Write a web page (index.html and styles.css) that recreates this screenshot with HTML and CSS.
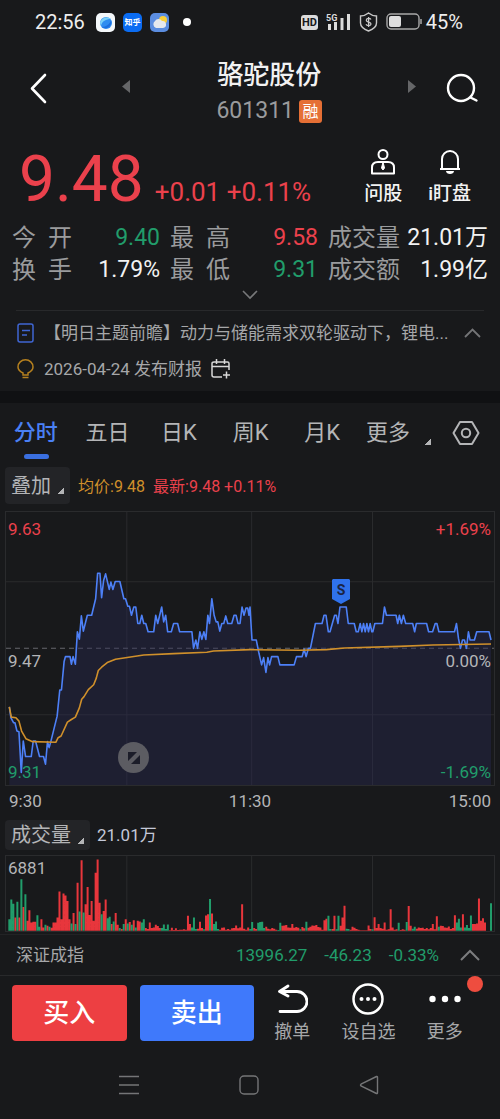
FILE: index.html
```html
<!DOCTYPE html>
<html lang="zh-CN">
<head>
    <meta charset="UTF-8">
    <meta name="viewport" content="width=device-width, initial-scale=1.0">
    <title>骆驼股份 601311</title>
    <link rel="stylesheet" href="styles.css">
</head>
<body>
    <div class="status-bar">
        <span class="clock">22:56</span>
        <span class="app-icon app-browser">
            <svg width="19" height="19" viewBox="0 0 19 19"><circle cx="10" cy="10" r="6" fill="#2f8df0"/><path d="M4 10c1-5 7-7 11-4-5 0-9 2-10 7z" fill="#7ad0f8"/><path d="M6 14c4 0 8-3 9-7 2 5-4 11-9 7z" fill="#1c6fe0"/></svg>
        </span>
        <span class="app-icon app-zhihu">知乎</span>
        <span class="app-icon app-weather">
            <svg width="19" height="19" viewBox="0 0 19 19"><circle cx="13" cy="7" r="4" fill="#f9cf3a"/><path d="M6 15a4 4 0 0 1-1-7 4 4 0 0 1 7 0 3.500 3.500 0 0 1 1 7z" fill="#e6e9ee"/></svg>
        </span>
        <span class="status-dot"></span>
        <div class="status-right">
            <span class="hd">HD</span>
            <svg width="25" height="18" viewBox="0 0 25 18">
                <text x="0" y="8" class="net-text">5G</text>
                <path d="M3.500 11v6M9.500 9v8M16 5v12M22.500 1v16" stroke="#dcdcdc" stroke-width="3"/>
            </svg>
            <svg class="shield" width="19" height="20" viewBox="0 0 19 20" fill="none" stroke="#c8c8c8">
                <path d="M9.500 1C7 3 4 4 1.500 4v7c0 4 4 6.500 8 8 4-1.500 8-4 8-8V4C15 4 12 3 9.500 1z" stroke-width="1.400"/>
                <path d="M12 7.500C11 6 7.300 6 7.300 8.200c0 2.400 4.700 1.400 4.700 3.700 0 2-4 2.200-5 .4M9.600 5v10" stroke-width="1.300"/>
            </svg>
            <svg class="battery" width="36" height="18" viewBox="0 0 36 18">
                <rect x="1" y="1" width="32" height="15" rx="4" fill="none" stroke="#a8a8a8" stroke-width="1.400"/>
                <rect x="3" y="3" width="12" height="11" rx="2" fill="#dedede"/>
                <path d="M35 6v5" stroke="#a8a8a8" stroke-width="1.500"/>
            </svg>
            <span class="battery-text">45%</span>
        </div>
    </div>

    <header class="header">
        <button class="icon-btn" aria-label="返回">
            <svg width="20" height="32" viewBox="0 0 20 32"><path d="M17 3L4 16.500 17 30" fill="none" stroke="#fff" stroke-width="2.600" stroke-linecap="round" stroke-linejoin="round"/></svg>
        </button>
        <div class="switcher">
            <button class="icon-btn" aria-label="上一只">
                <svg width="8" height="13" viewBox="0 0 8 13"><path d="M8 0v13L0 6.500z" fill="#656668"/></svg>
            </button>
            <div class="title">
                <h1>骆驼股份</h1>
                <div class="code"><span>601311</span><span class="tag">融</span></div>
            </div>
            <button class="icon-btn" aria-label="下一只">
                <svg width="8" height="13" viewBox="0 0 8 13"><path d="M0 0v13l8-6.500z" fill="#656668"/></svg>
            </button>
        </div>
        <button class="icon-btn" aria-label="搜索">
            <svg width="34" height="32" viewBox="0 0 34 32" fill="none" stroke="#fff" stroke-width="2.400" stroke-linecap="round"><circle cx="15" cy="16" r="13"/><path d="M24.500 25.500l6 3"/></svg>
        </button>
    </header>

    <section class="quote">
        <div class="price-row">
            <span class="price">9.48</span>
            <span class="change">+0.01 +0.11%</span>
            <div class="actions">
                <button class="action">
                    <svg width="26" height="28" viewBox="0 0 26 28" fill="none" stroke="#fff" stroke-width="2"><circle cx="13" cy="6.500" r="4.500"/><path d="M2 25.500v-6c0-4 2-5.500 6-5.500h10c4 0 6 1.500 6 5.500v6z" stroke-linejoin="round"/><path d="M13 14l-1.500 6 1.500 2 1.500-2z" fill="#fff" stroke-width="1"/></svg>
                    <span>问股</span>
                </button>
                <button class="action">
                    <svg width="22" height="28" viewBox="0 0 22 28"><path d="M3 21V11a8 8 0 0 1 16 0v10z" fill="none" stroke="#fff" stroke-width="2"/><path d="M1 21h20" stroke="#fff" stroke-width="2"/><path d="M7 23h8c0 4-8 4-8 0z" fill="#fff"/></svg>
                    <span>i盯盘</span>
                </button>
            </div>
        </div>
        <dl class="stats">
            <dt>今 开</dt><dd class="down">9.40</dd>
            <dt>最 高</dt><dd class="up">9.58</dd>
            <dt>成交量</dt><dd>21.01万</dd>
            <dt>换 手</dt><dd>1.79%</dd>
            <dt>最 低</dt><dd class="down">9.31</dd>
            <dt>成交额</dt><dd>1.99亿</dd>
        </dl>
        <button class="expand" aria-label="展开">
            <svg width="16" height="10" viewBox="0 0 16 10"><path d="M1 1l7 7 7-7" fill="none" stroke="#77787a" stroke-width="1.600"/></svg>
        </button>
    </section>

    <section class="news">
        <a href="#" class="news-row">
            <svg width="18" height="20" viewBox="0 0 18 20" fill="none" stroke="#3f66d4" stroke-width="1.500"><rect x="1" y="1" width="15" height="18" rx="2"/><path d="M5 7.500h8M5 12h5"/></svg>
            <span class="news-title">【明日主题前瞻】动力与储能需求双轮驱动下，锂电...</span>
            <svg class="news-arrow" width="17" height="10" viewBox="0 0 17 10"><path d="M1 9l7.500-7.500L16 9" fill="none" stroke="#747577" stroke-width="1.800"/></svg>
        </a>
        <a href="#" class="news-row">
            <svg width="18" height="20" viewBox="0 0 18 20" fill="none" stroke="#b5801f" stroke-width="1.500"><path d="M6 16v-2C3 12.500 1 10.500 1 8a7.500 7.200 0 0 1 15 0c0 2.500-2 4.500-5 6v2zM5.500 18.500h6"/></svg>
            <span>2026-04-24 发布财报</span>
            <svg width="20" height="20" viewBox="0 0 20 20" fill="none" stroke="#d8d8d8" stroke-width="1.500"><path d="M11 18H3c-1.500 0-2-.5-2-2V4.500C1 3.500 1.500 3 3 3h13.500c1 0 1.500.5 1.500 1.500V11M1 7.500h17M5.500 0v5M13.500 0v5M15.500 12.500v7M12 16h7"/></svg>
        </a>
    </section>

    <nav class="tabs">
        <button class="tab active">分时</button>
        <button class="tab">五日</button>
        <button class="tab">日K</button>
        <button class="tab">周K</button>
        <button class="tab">月K</button>
        <div class="tabs-end">
            <button class="more">更多<i class="corner"></i></button>
            <button class="icon-btn" aria-label="设置">
                <svg width="28" height="26" viewBox="0 0 28 26" fill="none" stroke="#b4b5b7" stroke-width="2"><path d="M8 2h12l6.500 11L20 24H8L1.500 13z" stroke-linejoin="round"/><circle cx="14" cy="13" r="4.200"/></svg>
            </button>
        </div>
    </nav>

    <div class="legend">
        <button class="chip">叠加<i class="corner"></i></button>
        <span class="avg">均价:9.48</span>
        <span class="up">最新:9.48 +0.11%</span>
    </div>

    <div class="chart price-chart">
        <svg class="plot" viewBox="15 18 1470 825" preserveAspectRatio="none">
            <path class="grid" d="M15 229H1485M15 631H1485M379 18V843M755 18V843M1119 18V843"/>
            <path class="grid dashed" d="M15 430H1485"/>
            <path id="priceArea" class="area"/>
            <path id="priceLine" class="line"/>
            <path id="avgLine" class="line avg-line"/>
        </svg>
        <span class="label top-left up">9.63</span>
        <span class="label top-right up">+1.69%</span>
        <span class="label mid-left">9.47</span>
        <span class="label mid-right">0.00%</span>
        <span class="label bottom-left down">9.31</span>
        <span class="label bottom-right down">-1.69%</span>
        <svg class="marker" width="18" height="25" viewBox="0 0 18 25"><path d="M1 0h16l1 1v19l-9 5-9-5V1z" fill="#2f72ec"/><text x="9" y="16" text-anchor="middle">S</text></svg>
        <button class="zoom-btn" aria-label="全屏">
            <svg width="14" height="14" viewBox="0 0 14 14" fill="#1c1d29"><path d="M1 1h9L1 10zM13 4v9H4z"/></svg>
        </button>
    </div>
    <div class="times"><span>9:30</span><span>11:30</span><span>15:00</span></div>

    <div class="volume-head">
        <button class="chip">成交量<i class="corner"></i></button>
        <span>21.01万</span>
    </div>
    <div class="chart volume-chart">
        <svg class="plot" viewBox="15 121 1470 228" preserveAspectRatio="none">
            <path class="grid" d="M379 121V349M755 121V349M1119 121V349"/>
            <path id="volUp" class="vol vol-up"/>
            <path id="volDown" class="vol vol-down"/>
        </svg>
        <span class="label volume-label">6881</span>
    </div>

    <div class="index-bar">
        <span class="index-name">深证成指</span>
        <span>13996.27</span>
        <span>-46.23</span>
        <span>-0.33%</span>
        <svg width="20" height="12" viewBox="0 0 20 12"><path d="M1 11l9-9 9 9" fill="none" stroke="#7c7d7f" stroke-width="2"/></svg>
    </div>

    <footer class="trade">
        <button class="trade-btn buy">买入</button>
        <button class="trade-btn sell">卖出</button>
        <button class="tool">
            <svg width="32" height="32" viewBox="0 0 32 32" fill="none" stroke="#fff" stroke-width="2.800" stroke-linecap="round" stroke-linejoin="round"><path d="M12 3L3.500 8.500 12 13M4 8.500h17a9.800 9.800 0 0 1 0 20H4"/></svg>
            <span>撤单</span>
        </button>
        <button class="tool">
            <svg width="32" height="32" viewBox="0 0 32 32"><circle cx="16" cy="16" r="14.500" fill="none" stroke="#fff" stroke-width="2.500"/><g fill="#fff"><circle cx="9.500" cy="16" r="2"/><circle cx="16" cy="16" r="2"/><circle cx="22.500" cy="16" r="2"/></g></svg>
            <span>设自选</span>
        </button>
        <button class="tool">
            <svg width="32" height="32" viewBox="0 0 32 32" fill="#fff"><circle cx="3.500" cy="16" r="3.200"/><circle cx="16" cy="16" r="3.200"/><circle cx="28.500" cy="16" r="3.200"/></svg>
            <span>更多</span>
            <i class="badge"></i>
        </button>
    </footer>

    <div class="system-nav">
        <svg width="20" height="20" viewBox="0 0 20 20"><path d="M0 1.500h20M0 10h20M0 18.500h20"/></svg>
        <svg width="20" height="20" viewBox="0 0 20 20"><rect x="1" y="1" width="18" height="18" rx="4"/></svg>
        <svg width="20" height="20" viewBox="0 0 20 20"><path d="M17.500 1.500Q18.500 1 18.500 2.500v15q0 1.500-1 1L2 11q-1-1 0-1.800z"/></svg>
    </div>

    <script src="script.js"></script>
</body>
</html>
```
FILE: styles.css
```css
* {
    box-sizing: border-box;
}
body {
    margin: 0;
    background: #18191b;
    color: #b4b5b7;
    font-family: Roboto, "Noto Sans CJK SC", sans-serif;
    font-size: 17px;
    line-height: 24px;
}
button {
    padding: 0;
    border: none;
    background: none;
    color: inherit;
    font: inherit;
    cursor: pointer;
}
svg {
    display: block;
    flex: none;
}
.up {
    color: #eb414c;
}
.down {
    color: #219d6b;
}
.corner {
    width: 7px;
    height: 7px;
    background: linear-gradient(135deg, transparent 50%, #b4b5b7 50%);
}

/* status bar */
.status-bar {
    display: flex;
    align-items: center;
    height: 44px;
    padding: 0 37px 0 35px;
    color: #eeeeee;
}
.clock {
    width: 61px;
    font-size: 20px;
}
.app-icon {
    width: 19px;
    height: 19px;
    margin-right: 8px;
    border-radius: 5px;
    overflow: hidden;
}
.app-browser {
    background: #f4f8fb;
}
.app-zhihu {
    background: #0b6cf2;
    color: #ffffff;
    font-size: 8px;
    font-weight: bold;
    line-height: 19px;
    text-align: center;
}
.app-weather {
    background: #5b8de0;
}
.status-dot {
    width: 8px;
    height: 8px;
    margin-left: 6px;
    border-radius: 50%;
    background: #ffffff;
}
.status-right {
    display: flex;
    align-items: center;
    gap: 8px;
    margin-left: auto;
}
.hd {
    width: 17px;
    height: 15px;
    border-radius: 3px;
    background: #dcdcdc;
    color: #18191b;
    font-size: 11px;
    font-weight: bold;
    line-height: 15px;
    text-align: center;
}
.net-text {
    fill: #dcdcdc;
    font-size: 9px;
    font-weight: bold;
}
.battery-text {
    margin-left: -4px;
    font-size: 20px;
}

/* header */
.header {
    display: flex;
    align-items: center;
    height: 86px;
    padding: 2px 20px 0 28px;
}
.icon-btn {
    display: flex;
}
.switcher {
    display: flex;
    align-items: center;
    gap: 86px;
    margin: 0 30px 4px auto;
}
.title {
    padding-top: 14px;
    text-align: center;
}
.title h1 {
    margin: 0;
    color: #f2f2f2;
    font-size: 26px;
    font-weight: 500;
    line-height: 36px;
}
.code {
    display: flex;
    align-items: center;
    justify-content: center;
    gap: 5px;
    color: #9a9b9d;
    font-size: 23px;
    line-height: 36px;
}
.tag {
    width: 23px;
    height: 23px;
    border-radius: 3px;
    background: #e56f35;
    color: #ffffff;
    font-size: 16px;
    line-height: 23px;
    text-align: center;
}

/* quote */
.price-row {
    display: flex;
    align-items: baseline;
    height: 92px;
    padding: 0 29px 0 19px;
    color: #eb414c;
}
.price {
    font-size: 64px;
    line-height: 100px;
}
.change {
    margin-left: 11px;
    font-size: 26px;
}
.actions {
    display: flex;
    align-self: flex-start;
    gap: 26px;
    margin-left: auto;
    padding-top: 18px;
}
.action {
    display: flex;
    flex-direction: column;
    align-items: center;
    gap: 5px;
    color: #f2f2f2;
    font-size: 19px;
    font-weight: 500;
    line-height: 26px;
}
.stats {
    display: grid;
    grid-template-columns: 60px 1fr 70px 1fr 82px 1fr;
    margin: 0;
    padding: 0 12px;
    font-size: 24px;
    line-height: 32px;
}
.stats dt {
    color: #9a9b9d;
    text-align-last: justify;
}
.stats dt:not(:nth-of-type(3n + 1)) {
    padding-left: 10px;
}
.stats dd {
    margin: 0;
    color: #f2f2f2;
    font-size: 23px;
    text-align: right;
    white-space: nowrap;
}
.stats dd.up {
    color: #eb414c;
}
.stats dd.down {
    color: #219d6b;
}
.expand {
    display: flex;
    margin: 0 auto;
    padding: 4px 0 10px;
}

/* news */
.news {
    padding-bottom: 4px;
    border-bottom: 12px solid #101113;
}
.news::before {
    content: "";
    display: block;
    margin: 0 16px 4px;
    border-top: 1px solid #28292b;
}
.news-row {
    display: flex;
    align-items: center;
    gap: 9px;
    height: 36px;
    padding: 0 19px 0 17px;
    color: #a6a7a9;
    text-decoration: none;
    white-space: nowrap;
}
.news-title {
    overflow: hidden;
}
.news-arrow {
    margin-left: auto;
}

/* tabs */
.tabs {
    display: flex;
    align-items: center;
    height: 64px;
    padding-bottom: 4px;
    font-size: 22px;
}
.tab {
    position: relative;
    flex: 1;
    height: 60px;
}
.tab.active {
    color: #4a80f5;
    font-weight: 500;
}
.tab.active::after {
    content: "";
    position: absolute;
    bottom: 4px;
    left: 50%;
    width: 25px;
    height: 5px;
    margin-left: -12px;
    border-radius: 3px;
    background: #3a6fe0;
}
.tabs-end {
    display: flex;
    align-items: center;
    justify-content: space-between;
    width: 142px;
    padding: 0 20px 0 8px;
}
.more {
    display: flex;
    align-items: flex-end;
    gap: 14px;
}

/* legend and chips */
.legend, .volume-head {
    display: flex;
    align-items: center;
    padding: 0 5px;
}
.legend {
    gap: 8px;
    height: 37px;
    margin-bottom: 7px;
    font-size: 16px;
}
.legend span {
    padding-top: 2px;
}
.avg {
    color: #d0902b;
}
.chip {
    display: flex;
    align-items: center;
    gap: 6px;
    height: 100%;
    padding: 0 6px;
    border-radius: 4px;
    background: #232427;
    font-size: 20px;
}
.chip .corner {
    margin-top: 10px;
}
.volume-head {
    gap: 7px;
    height: 30px;
    margin-bottom: 5px;
    color: #c4c8d8;
}
.volume-head .chip {
    color: #b4b5b7;
}

/* charts */
.chart {
    position: relative;
    margin: 0 5px;
    border: 1px solid #2a2b2d;
}
.price-chart {
    height: 275px;
}
.volume-chart {
    height: 77px;
}
.plot {
    width: 100%;
    height: 100%;
}
.plot path {
    fill: none;
    vector-effect: non-scaling-stroke;
}
.plot .grid {
    stroke: #2a2b2d;
    stroke-width: 1;
}
.plot .dashed {
    stroke: #65676d;
    stroke-dasharray: 5 4;
}
.plot .area {
    fill: #282850;
    fill-opacity: 0.42;
}
.plot .line {
    stroke: #4d80f7;
    stroke-width: 1.6;
    stroke-linejoin: round;
}
.plot .avg-line {
    stroke: #d0902b;
}
.plot .vol {
    stroke-width: 2;
}
.plot .vol-up {
    stroke: #e8363c;
}
.plot .vol-down {
    stroke: #219d6b;
}
.label {
    position: absolute;
    line-height: 20px;
}
.top-left, .mid-left, .bottom-left {
    left: 2px;
}
.top-right, .mid-right, .bottom-right {
    right: 3px;
}
.top-left, .top-right {
    top: 7px;
}
.mid-left, .mid-right {
    top: 51%;
}
.bottom-left, .bottom-right {
    bottom: 3px;
}
.volume-label {
    top: 2px;
    left: 2px;
}
.marker {
    position: absolute;
    top: 67px;
    left: 67%;
    margin-left: -1px;
}
.marker text {
    fill: #1b2444;
    font-size: 14px;
    font-weight: bold;
}
.zoom-btn {
    position: absolute;
    bottom: 12px;
    left: 23%;
    display: flex;
    align-items: center;
    justify-content: center;
    width: 31px;
    height: 31px;
    border-radius: 50%;
    background: #5c5c62;
}
.times {
    display: flex;
    padding: 3px 9px 7px;
}
.times span {
    flex: 1;
    text-align: center;
}
.times span:first-child {
    text-align: left;
}
.times span:last-child {
    text-align: right;
}

/* index bar */
.index-bar {
    display: flex;
    align-items: center;
    gap: 17px;
    height: 42px;
    margin-top: 2px;
    padding: 0 20px 0 16px;
    border-top: 1px solid #222325;
    border-bottom: 1px solid #28292b;
    color: #219d6b;
}
.index-name {
    margin-right: auto;
    color: #a6a7a9;
}
.index-bar svg {
    margin-left: 4px;
}

/* trade bar */
.trade {
    display: flex;
    padding: 9px 17px 0 12px;
}
.trade-btn {
    flex: 3;
    height: 56px;
    border-radius: 4px;
    color: #ffffff;
    font-size: 26px;
    font-weight: 500;
}
.buy {
    margin-right: 13px;
    background: #ed3f42;
}
.sell {
    background: #3f79fb;
}
.tool {
    position: relative;
    display: flex;
    flex: 2;
    flex-direction: column;
    align-items: center;
    gap: 5px;
    margin-top: -2px;
    color: #a6a7a9;
    font-size: 18px;
}
.badge {
    position: absolute;
    top: -7px;
    right: 0;
    width: 16px;
    height: 16px;
    border-radius: 50%;
    background: #ee4d3f;
}

/* system navigation */
.system-nav {
    display: flex;
    justify-content: center;
    gap: 100px;
    padding: 31px 2px 24px 0;
}
.system-nav svg {
    fill: none;
    stroke: #747577;
    stroke-width: 1.4;
}
```
FILE: script.js
```js
// price and average lines, in the units of the plot's viewBox
const price = '25,607 30,640 38,655 42,655 48,680 54,682 61,805 67,710 74,757 91,757 97,710 104,710 116,757 128,757 134,780 140,712 145,730 150,712 169,635 177,556 182,556 190,470 194,455 208,455 212,478 217,455 224,478 230,380 236,402 242,332 248,378 260,330 273,330 285,280 291,203 298,203 303,277 309,225 315,205 326,252 331,230 337,252 344,228 358,228 370,280 375,280 382,303 387,303 393,330 400,305 406,305 412,355 418,355 424,330 430,355 436,355 443,380 460,380 466,330 472,355 484,305 490,350 496,330 502,380 513,380 520,355 532,355 538,380 575,380 580,430 587,405 592,430 599,380 605,403 611,380 617,403 623,330 628,355 635,280 642,330 648,350 653,350 659,378 665,355 671,355 677,332 683,355 695,355 702,330 708,330 714,355 720,355 726,305 732,330 738,308 743,308 747,330 750,305 756,405 769,405 777,445 785,480 791,458 798,503 804,458 809,480 815,455 834,455 840,480 883,480 890,455 907,455 913,432 919,455 926,430 932,430 947,355 967,355 973,330 979,330 986,380 991,380 1005,330 1010,330 1015,355 1021,305 1040,305 1046,355 1064,355 1070,380 1076,380 1082,355 1087,380 1092,355 1097,380 1102,355 1107,380 1112,355 1117,380 1120,380 1126,355 1149,355 1155,305 1161,330 1190,330 1195,355 1200,330 1206,355 1212,330 1219,355 1240,355 1246,380 1251,355 1282,355 1288,380 1300,380 1308,355 1313,355 1319,380 1366,380 1372,355 1378,400 1384,430 1390,405 1396,405 1402,430 1408,380 1413,405 1426,405 1433,380 1470,380 1476,405';
const average = '25,607 31,638 45,640 54,650 62,680 75,703 95,712 165,714 172,700 181,695 200,653 212,645 224,638 236,610 243,584 250,576 263,555 279,540 287,520 293,497 303,487 320,473 345,463 430,450 520,446 620,442 640,438 750,434 900,436 980,434 1035,429 1200,424 1300,420 1476,417';

document.getElementById('priceLine').setAttribute('d', 'M' + price);
document.getElementById('priceArea').setAttribute('d', 'M25,843 ' + price + ' 1476,843Z');
document.getElementById('avgLine').setAttribute('d', 'M' + average);

// one bar per minute: r = up, g = down, then the bar height
const volume = 'g35 g95 g82 r40 g88 r40 g156 r72 g111 r30 r62 r25 r27 r27 g47 g12 r35 r10 g18 r15 g12 r9 r25 r25 r40 r119 r35 r113 r107 r90 r35 g22 r54 g20 r146 g58 r214 g55 r80 r133 r48 r90 r30 r176 r216 r85 g50 r60 r95 g38 g42 r20 g28 r54 r18 g8 r5 g20 r35 g22 r26 g18 r32 g10 r30 r28 g25 g35 r8 r5 r25 r8 r10 r18 r14 r8 g8 g19 g5 g19 r1 r9 r2 r7 r2 r3 r3 r4 r3 r45 r20 g10 g40 g5 r6 r27 r8 g4 r46 r50 g96 r52 g20 g28 g5 r3 r9 r10 r3 r5 r3 r7 r8 r16 r7 r10 r80 r6 r3 r10 g5 g26 r8 r5 g24 g26 g27 g8 r12 r6 r4 r8 r6 r3 g2 g24 r15 r16 r17 r10 r9 r20 r9 r11 r9 g4 r11 r7 g27 r9 r12 r16 r15 r17 r11 r10 r3 r32 r36 g45 g5 r5 r45 g4 g45 r15 r40 r76 g6 g5 r3 r12 r9 r5 r3 r1 r1 r1 r1 r16 r5 g4 r41 r8 r20 r8 r6 r25 r3 r4 r65 r10 r3 r4 g24 r2 r4 r3 g26 r75 r15 g6 g12 r6 r10 r8 r9 r5 r8 r4 r8 r20 r4 r44 g12 r15 r14 r10 r9 r13 r5 r8 r47 g25 g36 g10 r50 g10 g17 g8 g46 r20 r20 r22 r98 r30 r38 r25 r0 r0 g83'.split(' ');
const base = 348;
const step = (1476 - 25) / (volume.length - 1);

function bars(type) {
    return volume
        .map((v, i) => v[0] === type ? `M${(25 + i * step).toFixed(1)} ${base}v-${v.slice(1)}` : '')
        .join('');
}

document.getElementById('volUp').setAttribute('d', bars('r'));
document.getElementById('volDown').setAttribute('d', bars('g'));
```
